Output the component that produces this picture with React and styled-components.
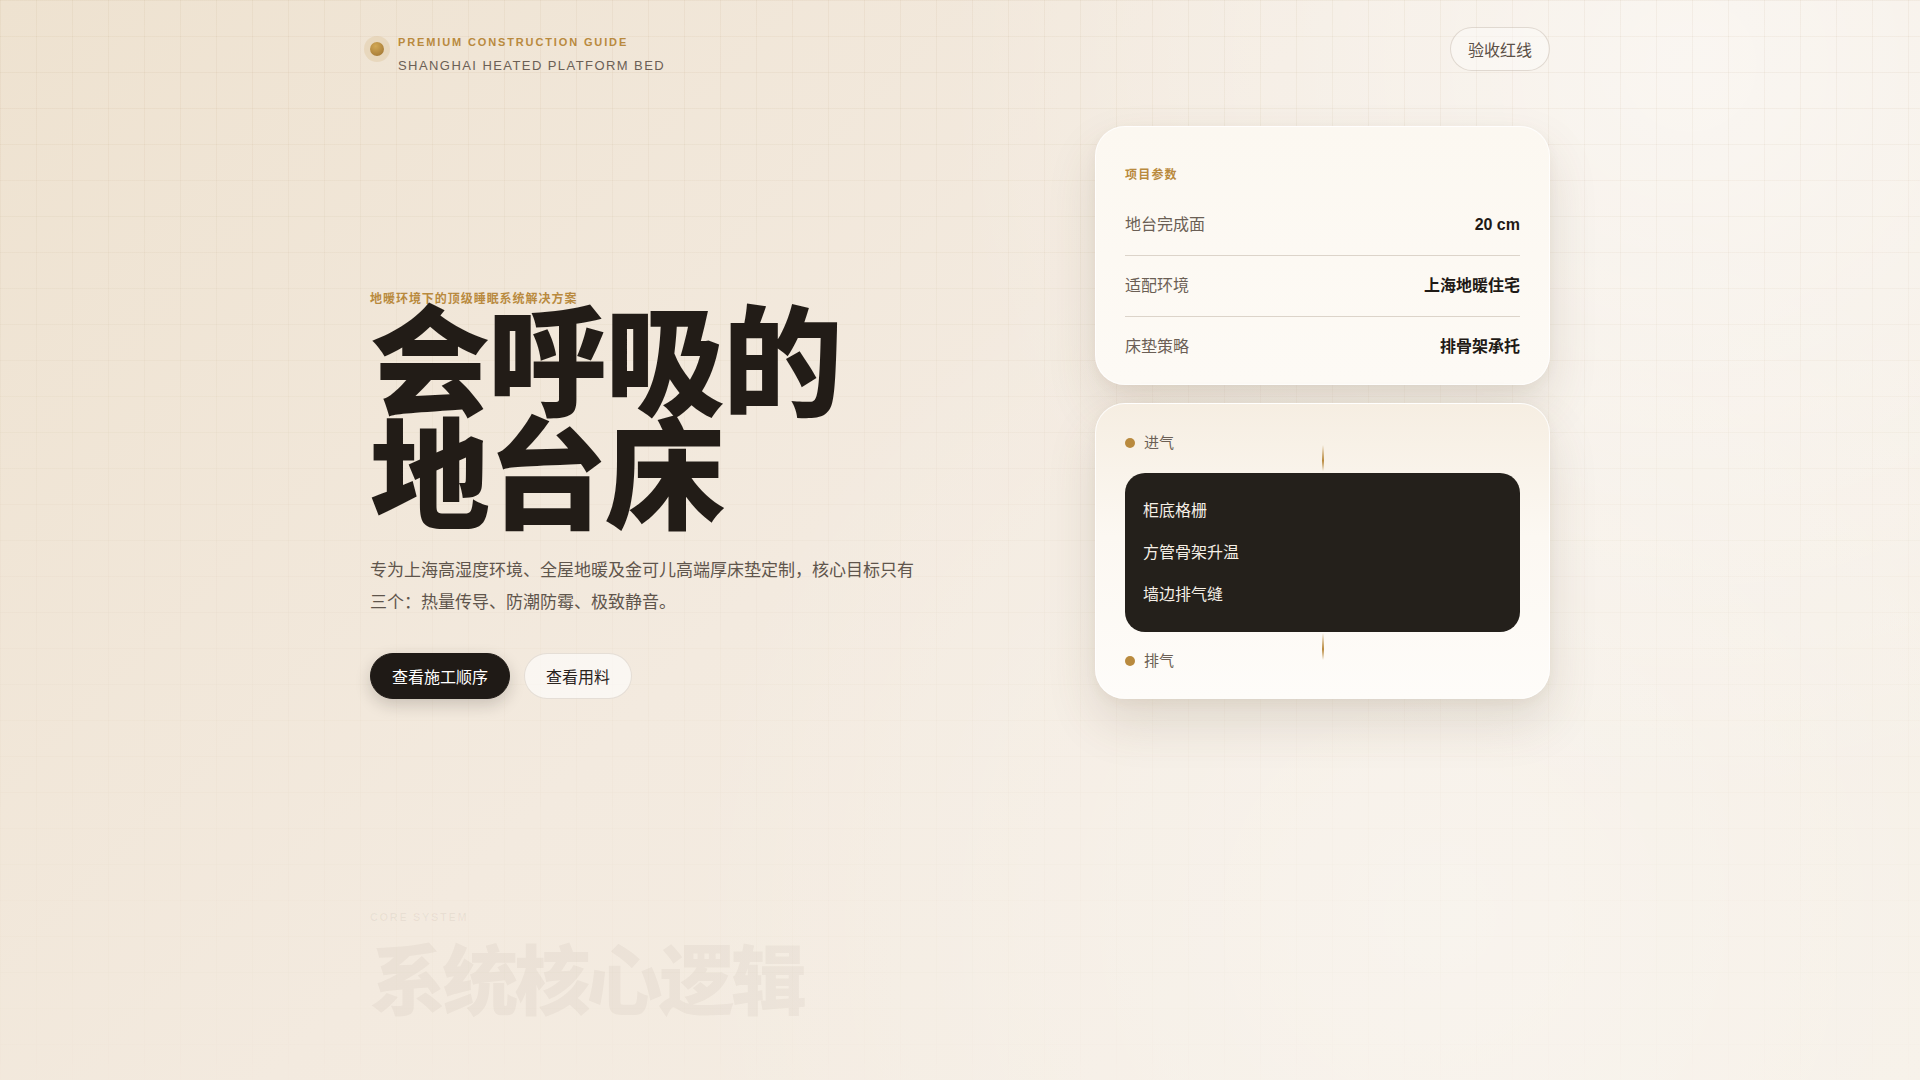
import styled, { createGlobalStyle } from "styled-components";

const GlobalStyle = createGlobalStyle`
  * { box-sizing: border-box; }
  html, body { margin: 0; padding: 0; }
  body {
    font-family: "Liberation Sans", "Noto Sans CJK SC", sans-serif;
    color: #221c17;
    background:
      radial-gradient(circle at 88% 6%, rgba(255, 255, 255, 0.55), transparent 38%),
      radial-gradient(circle at 75% 85%, rgba(255, 255, 255, 0.35), transparent 45%),
      linear-gradient(135deg, #eee2d0 0%, #f3eadf 45%, #f6f0e7 100%);
    min-height: 100vh;
  }
`;

const Page = styled.div`
  position: relative;
  min-height: 100vh;
  overflow: hidden;

  &::before {
    content: "";
    position: absolute;
    inset: 0;
    pointer-events: none;
    background-image:
      linear-gradient(to right, rgba(170, 135, 90, 0.075) 1px, transparent 1px),
      linear-gradient(to bottom, rgba(170, 135, 90, 0.075) 1px, transparent 1px);
    background-size: 36px 36px;
    -webkit-mask-image: linear-gradient(to bottom, black 0%, rgba(0, 0, 0, 0.45) 50%, rgba(0, 0, 0, 0.12) 100%);
    mask-image: linear-gradient(to bottom, black 0%, rgba(0, 0, 0, 0.45) 50%, rgba(0, 0, 0, 0.12) 100%);
  }
`;

const Container = styled.div`
  position: relative;
  max-width: 1180px;
  margin: 0 auto;
`;

const Header = styled.header`
  display: flex;
  justify-content: space-between;
  align-items: flex-start;
  padding-top: 27px;
`;

const Brand = styled.div`
  display: flex;
  align-items: flex-start;
  gap: 14px;
  margin-top: 7px;
`;

const BrandDot = styled.span`
  flex: none;
  width: 14px;
  height: 14px;
  margin-top: 8px;
  border-radius: 50%;
  background: radial-gradient(circle at 40% 30%, #d2a855, #9c7130);
  box-shadow: 0 0 0 6px rgba(215, 185, 135, 0.3);
`;

const BrandText = styled.div`
  display: flex;
  flex-direction: column;
  gap: 7px;
`;

const BrandKicker = styled.span`
  font-size: 11px;
  line-height: 16px;
  font-weight: 700;
  letter-spacing: 0.17em;
  color: #b98a3e;
`;

const BrandName = styled.span`
  font-size: 13px;
  line-height: 18px;
  letter-spacing: 0.11em;
  color: #6b5f55;
`;

const GhostPill = styled.button`
  height: 44px;
  padding: 0 17px;
  border-radius: 999px;
  border: 1px solid rgba(120, 95, 70, 0.2);
  background: rgba(255, 255, 255, 0.35);
  font-family: inherit;
  font-size: 16px;
  color: #5a4f46;
`;

const Hero = styled.section`
  display: grid;
  grid-template-columns: 1fr 455px;
  gap: 60px;
  align-items: end;
  margin-top: 51px;
`;

const Intro = styled.div`
  display: flex;
  flex-direction: column;
`;

const Eyebrow = styled.span`
  font-size: 12px;
  line-height: 18px;
  font-weight: 700;
  letter-spacing: 0.08em;
  color: #b98a3e;
  margin-bottom: -9px;
`;

const Title = styled.h1`
  margin: 0;
  font-family: "Noto Sans CJK SC", sans-serif;
  font-size: 120px;
  line-height: 0.94;
  font-weight: 900;
  letter-spacing: -0.02em;
  color: #221c17;
`;

const Lead = styled.p`
  margin: 30px 0 0;
  max-width: 560px;
  font-size: 17px;
  line-height: 32px;
  color: #5f554c;
`;

const Actions = styled.div`
  display: flex;
  gap: 14px;
  margin-top: 34px;
`;

const ActionButton = styled.button`
  height: 46px;
  padding: 0 21px;
  border-radius: 999px;
  font-family: inherit;
  font-size: 16px;
  border: 1px solid ${(p) => (p.$primary ? "#1f1a16" : "rgba(120, 95, 70, 0.16)")};
  background: ${(p) => (p.$primary ? "#1f1a16" : "rgba(255, 255, 255, 0.6)")};
  color: ${(p) => (p.$primary ? "#ffffff" : "#2a231d")};
  box-shadow: ${(p) => (p.$primary ? "0 6px 16px rgba(30, 22, 14, 0.18)" : "none")};
`;

const Cards = styled.div`
  display: flex;
  flex-direction: column;
  gap: 18px;
`;

const Card = styled.div`
  border-radius: 30px;
  border: 1px solid rgba(255, 255, 255, 0.8);
  background: ${(p) =>
    p.$tinted
      ? "linear-gradient(180deg, #f6eee2 0%, #fcf8f2 45%, #fefcf9 100%)"
      : "linear-gradient(180deg, #fcf8f1 0%, #fdfaf5 100%)"};
  box-shadow: 0 24px 50px rgba(95, 72, 40, 0.14), 0 4px 12px rgba(95, 72, 40, 0.05);
  padding: ${(p) => p.$pad};
`;

const CardLabel = styled.div`
  font-size: 12px;
  line-height: 16px;
  font-weight: 700;
  letter-spacing: 0.1em;
  color: #b98a3e;
  margin-bottom: 12px;
`;

const SpecRow = styled.div`
  display: flex;
  justify-content: space-between;
  align-items: center;
  padding: 19px 0;
  border-bottom: 1px solid #dcd4ca;
  font-size: 16px;
  line-height: 22px;

  &:last-child {
    border-bottom: none;
    padding-bottom: 0;
  }
`;

const SpecKey = styled.span`
  color: #6b5f55;
`;

const SpecValue = styled.span`
  font-weight: 700;
  color: #1f1a16;
`;

const FlowNode = styled.div`
  display: flex;
  align-items: center;
  gap: 9px;
  font-size: 15px;
  line-height: 22px;
  color: #6b5f55;

  &::before {
    content: "";
    width: 10px;
    height: 10px;
    border-radius: 50%;
    background: #b98a3e;
  }
`;

const FlowCore = styled.div`
  position: relative;
  margin: 19px 0 18px;
  padding: 27px 18px 26px;
  border-radius: 20px;
  background: #24201b;
  display: flex;
  flex-direction: column;
  gap: 20px;

  &::before,
  &::after {
    content: "";
    position: absolute;
    left: 50%;
    width: 2px;
    margin-left: -1px;
    background: linear-gradient(180deg, transparent, #b98a3e 60%, transparent);
  }

  &::before {
    top: -28px;
    height: 26px;
  }

  &::after {
    bottom: -28px;
    height: 27px;
  }
`;

const FlowStep = styled.span`
  font-size: 16px;
  line-height: 22px;
  color: #f5efe6;
`;

const Logic = styled.section`
  margin-top: 209px;
  display: flex;
  flex-direction: column;
  gap: 9px;
`;

const LogicKicker = styled.span`
  font-size: 11px;
  line-height: 18px;
  font-weight: 700;
  letter-spacing: 0.15em;
  color: rgba(70, 50, 30, 0.06);
`;

const LogicTitle = styled.h2`
  margin: 0;
  font-family: "Noto Sans CJK SC", sans-serif;
  font-size: 76px;
  line-height: 1.1;
  font-weight: 900;
  letter-spacing: -0.05em;
  color: rgba(70, 50, 30, 0.045);
`;

const specs = [
  ["地台完成面", "20 cm"],
  ["适配环境", "上海地暖住宅"],
  ["床垫策略", "排骨架承托"],
];

const steps = ["柜底格栅", "方管骨架升温", "墙边排气缝"];

export default function App() {
  return (
    <>
      <GlobalStyle />
      <Page>
        <Container>
          <Header>
            <Brand>
              <BrandDot />
              <BrandText>
                <BrandKicker>PREMIUM CONSTRUCTION GUIDE</BrandKicker>
                <BrandName>SHANGHAI HEATED PLATFORM BED</BrandName>
              </BrandText>
            </Brand>
            <GhostPill>验收红线</GhostPill>
          </Header>

          <Hero>
            <Intro>
              <Eyebrow>地暖环境下的顶级睡眠系统解决方案</Eyebrow>
              <Title>
                会呼吸的
                <br />
                地台床
              </Title>
              <Lead>
                专为上海高湿度环境、全屋地暖及金可儿高端厚床垫定制，核心目标只有三个：热量传导、防潮防霉、极致静音。
              </Lead>
              <Actions>
                <ActionButton $primary>查看施工顺序</ActionButton>
                <ActionButton>查看用料</ActionButton>
              </Actions>
            </Intro>

            <Cards>
              <Card $pad="40px 29px 26px">
                <CardLabel>项目参数</CardLabel>
                {specs.map(([k, v]) => (
                  <SpecRow key={k}>
                    <SpecKey>{k}</SpecKey>
                    <SpecValue>{v}</SpecValue>
                  </SpecRow>
                ))}
              </Card>
              <Card $tinted $pad="28px 29px 26px">
                <FlowNode>进气</FlowNode>
                <FlowCore>
                  {steps.map((s) => (
                    <FlowStep key={s}>{s}</FlowStep>
                  ))}
                </FlowCore>
                <FlowNode>排气</FlowNode>
              </Card>
            </Cards>
          </Hero>

          <Logic>
            <LogicKicker>CORE SYSTEM</LogicKicker>
            <LogicTitle>系统核心逻辑</LogicTitle>
          </Logic>
        </Container>
      </Page>
    </>
  );
}
